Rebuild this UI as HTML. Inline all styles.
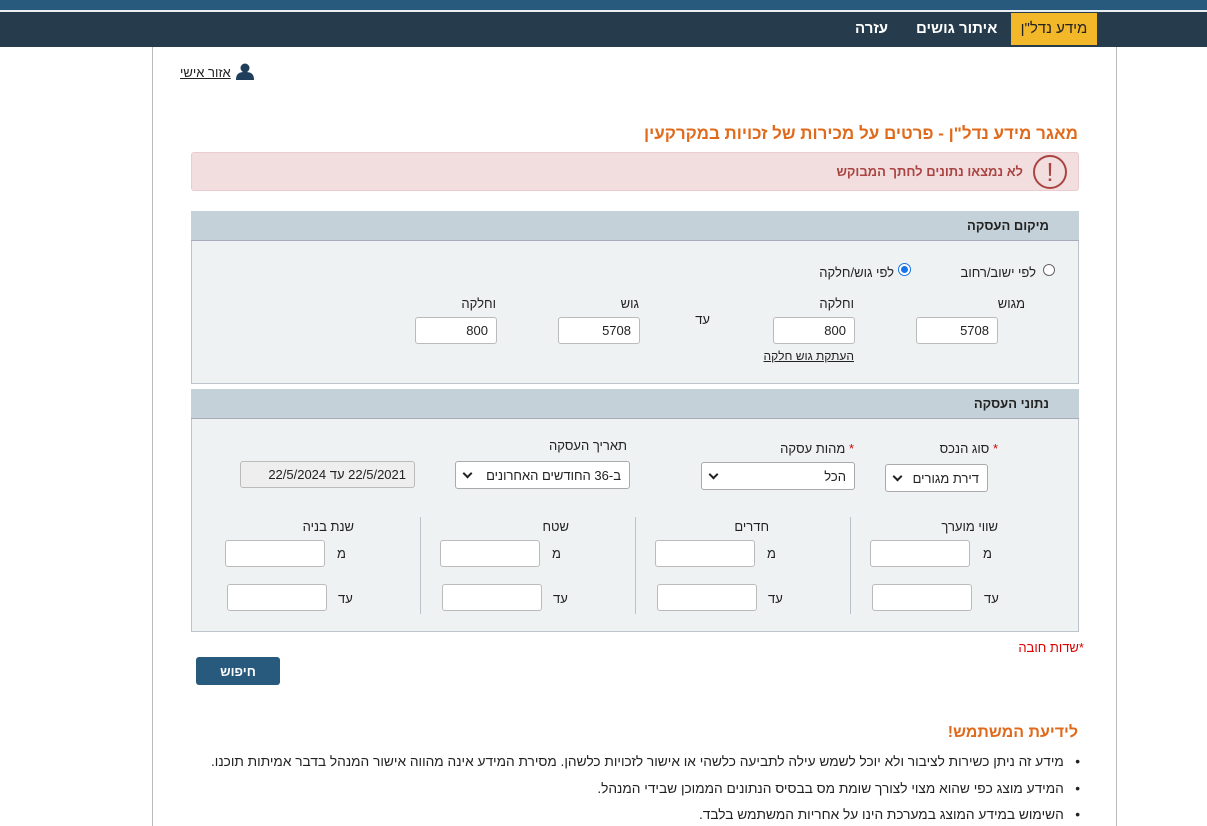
<!DOCTYPE html>
<html><head><meta charset="utf-8"><style>
*{box-sizing:border-box;margin:0;padding:0}
body{width:1207px;height:826px;overflow:hidden;background:#fff;font-family:"Liberation Sans","DejaVu Sans",sans-serif;font-size:13px;color:#222;position:relative}
.a{position:absolute;white-space:nowrap}
.r{direction:rtl}
.inp{position:absolute;background:#fff;border:1px solid #bbb;border-radius:3px;height:27px;font-size:13px;direction:rtl;padding:5px 8px 0 0;text-align:left;padding-left:0}
.num{text-align:right;direction:ltr;padding:5px 8px 0 0}
.hdr{position:absolute;background:#c4d1d8;border-bottom:1px solid #aab;font-weight:bold;font-size:13px;color:#222;direction:rtl;padding:7px 30px 0 0;height:30px}
.sel{position:absolute;background:#fff;border:1px solid #aaa;border-radius:3px;height:28px;direction:rtl;padding:6px 8px 0 0;font-size:13px}
.chev{position:absolute;left:8px;top:8px;width:7px;height:7px;border-right:2px solid #222;border-bottom:2px solid #222;transform:rotate(45deg)}
</style></head><body>
<div class="a" style="left:0;top:0;width:1207px;height:10px;background:#285a7d"></div>
<div class="a" style="left:0;top:10px;width:1207px;height:2px;background:#e8eef2"></div>
<div class="a" style="left:0;top:12px;width:1207px;height:35px;background:#263b4b"></div>
<div class="a" style="left:1011px;top:13px;width:86px;height:32px;background:#f3b72a;color:#222;font-size:15px;padding-top:7px;text-align:center">מידע נדל"ן</div>
<div class="a r" style="left:916px;top:20px;color:#fff;font-size:15px;font-weight:bold">איתור גושים</div>
<div class="a r" style="left:855px;top:20px;color:#fff;font-size:15px;font-weight:bold">עזרה</div>
<div class="a" style="left:152px;top:47px;width:1px;height:779px;background:#bbb"></div>
<div class="a" style="left:1116px;top:47px;width:1px;height:779px;background:#bbb"></div>
<svg class="a" style="left:236px;top:63px" width="18" height="17" viewBox="0 0 18 17"><circle cx="9" cy="5" r="4.5" fill="#1f3e5c"/><path d="M0 17 C0 10 4 9 9 9 C14 9 18 10 18 17Z" fill="#1f3e5c"/></svg>
<div class="a r" style="left:180px;top:65px;text-decoration:underline;color:#222">אזור אישי</div>
<div class="a r" style="right:129px;top:124px;color:#e06a1b;font-size:17px;font-weight:bold">מאגר מידע נדל"ן - פרטים על מכירות של זכויות במקרקעין</div>
<div class="a" style="left:191px;top:152px;width:888px;height:39px;background:#f2dede;border:1px solid #ebccd1;border-radius:3px"></div>
<div class="a" style="left:1033px;top:155px;width:34px;height:34px;border:2px solid #a94442;border-radius:50%;color:#a94442;font-size:26px;text-align:center;line-height:30px">!</div>
<div class="a r" style="right:184px;top:164px;color:#a94442;font-weight:bold">לא נמצאו נתונים לחתך המבוקש</div>
<div class="a" style="left:191px;top:211px;width:888px;height:173px;background:#eff2f3;border:1px solid #bcc5cb"></div>
<div class="hdr" style="left:191px;top:211px;width:888px">מיקום העסקה</div>
<div class="a" style="left:1043px;top:264px;width:12px;height:12px;border:1px solid #666;border-radius:50%;background:#fff"></div>
<div class="a r" style="right:171px;top:265px">לפי ישוב/רחוב</div>
<div class="a" style="left:898px;top:263px;width:13px;height:13px;border:1px solid #1a73e8;border-radius:50%;background:#fff"><div style="margin:2px;width:7px;height:7px;border-radius:50%;background:#1a73e8"></div></div>
<div class="a r" style="right:313px;top:265px">לפי גוש/חלקה</div>
<div class="a r" style="right:182px;top:296px">מגוש</div>
<div class="a r" style="right:353px;top:296px">וחלקה</div>
<div class="a r" style="right:568px;top:296px">גוש</div>
<div class="a r" style="right:711px;top:296px">וחלקה</div>
<div class="a r" style="right:497px;top:312px">עד</div>
<div class="inp num" style="left:916px;top:317px;width:82px">5708</div>
<div class="inp num" style="left:773px;top:317px;width:82px">800</div>
<div class="inp num" style="left:558px;top:317px;width:82px">5708</div>
<div class="inp num" style="left:415px;top:317px;width:82px">800</div>
<div class="a r" style="right:353px;top:349px;text-decoration:underline;font-size:12px">העתקת גוש חלקה</div>
<div class="a" style="left:191px;top:389px;width:888px;height:243px;background:#eff2f3;border:1px solid #bcc5cb"></div>
<div class="hdr" style="left:191px;top:389px;width:888px">נתוני העסקה</div>
<div class="a r" style="right:209px;top:441px"><span style="color:#d00">*</span> סוג הנכס</div>
<div class="a r" style="right:353px;top:441px"><span style="color:#d00">*</span> מהות עסקה</div>
<div class="a r" style="right:580px;top:438px">תאריך העסקה</div>
<div class="sel" style="left:885px;top:464px;width:103px">דירת מגורים<div class="chev"></div></div>
<div class="sel" style="left:701px;top:462px;width:154px">הכל<div class="chev"></div></div>
<div class="sel" style="left:455px;top:461px;width:175px">ב-36 החודשים האחרונים<div class="chev"></div></div>
<div class="inp" style="left:240px;top:461px;width:175px;background:#eee;text-align:right">22/5/2021 עד 22/5/2024</div>
<div class="a" style="left:850px;top:517px;width:1px;height:97px;background:#b8c2c8"></div>
<div class="a" style="left:635px;top:517px;width:1px;height:97px;background:#b8c2c8"></div>
<div class="a" style="left:420px;top:517px;width:1px;height:97px;background:#b8c2c8"></div>
<div class="a r" style="right:209px;top:519px">שווי מוערך</div>
<div class="a r" style="right:438px;top:519px">חדרים</div>
<div class="a r" style="right:638px;top:519px">שטח</div>
<div class="a r" style="right:853px;top:519px">שנת בניה</div>
<div class="inp" style="left:870px;top:540px;width:100px"></div><div class="a" style="left:983px;top:546px">מ</div>
<div class="inp" style="left:655px;top:540px;width:100px"></div><div class="a" style="left:767px;top:546px">מ</div>
<div class="inp" style="left:440px;top:540px;width:100px"></div><div class="a" style="left:552px;top:546px">מ</div>
<div class="inp" style="left:225px;top:540px;width:100px"></div><div class="a" style="left:337px;top:546px">מ</div>
<div class="inp" style="left:872px;top:584px;width:100px"></div><div class="a r" style="left:984px;top:591px">עד</div>
<div class="inp" style="left:657px;top:584px;width:100px"></div><div class="a r" style="left:768px;top:591px">עד</div>
<div class="inp" style="left:442px;top:584px;width:100px"></div><div class="a r" style="left:553px;top:591px">עד</div>
<div class="inp" style="left:227px;top:584px;width:100px"></div><div class="a r" style="left:338px;top:591px">עד</div>
<div class="a r" style="right:123px;top:640px;color:#d00">*שדות חובה</div>
<div class="a" style="left:196px;top:657px;width:84px;height:28px;background:#285a7d;border-radius:3px;color:#fff;font-weight:bold;text-align:center;padding-top:7px">חיפוש</div>
<div class="a r" style="right:129px;top:724px;color:#e06a1b;font-size:16px;font-weight:bold">לידיעת המשתמש!</div>
<div class="a r" style="right:127px;top:754px;font-size:13.7px">•&nbsp;&nbsp;&nbsp;מידע זה ניתן כשירות לציבור ולא יוכל לשמש עילה לתביעה כלשהי או אישור לזכויות כלשהן. מסירת המידע אינה מהווה אישור המנהל בדבר אמיתות תוכנו.</div>
<div class="a r" style="right:127px;top:781px;font-size:13.7px">•&nbsp;&nbsp;&nbsp;המידע מוצג כפי שהוא מצוי לצורך שומת מס בבסיס הנתונים הממוכן שבידי המנהל.</div>
<div class="a r" style="right:127px;top:807px;font-size:13.7px">•&nbsp;&nbsp;&nbsp;השימוש במידע המוצג במערכת הינו על אחריות המשתמש בלבד.</div>
</body></html>
